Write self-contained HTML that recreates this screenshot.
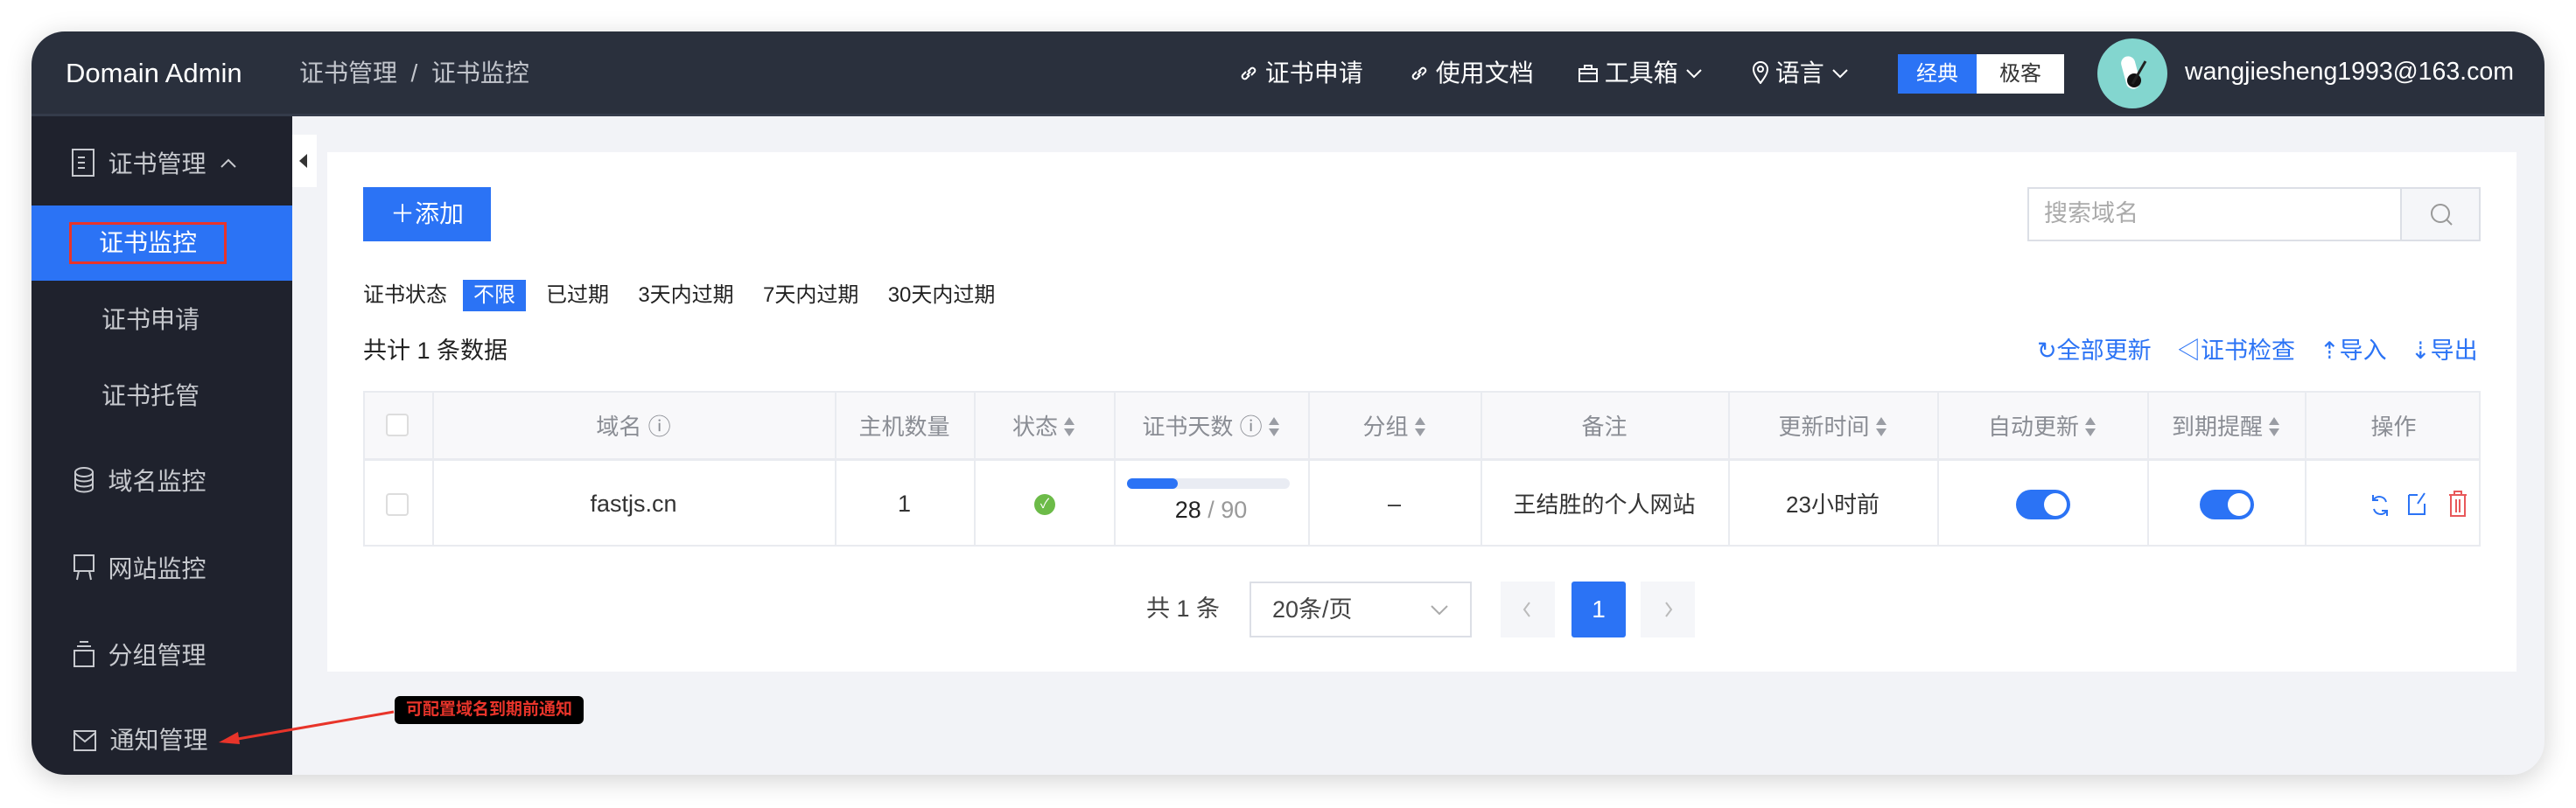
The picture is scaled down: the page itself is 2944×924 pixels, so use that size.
<!DOCTYPE html>
<html><head><meta charset="utf-8"><style>
*{box-sizing:border-box;margin:0;padding:0}
body{width:2944px;height:924px;background:#fff;font-family:"Liberation Sans","Noto Sans CJK SC",sans-serif;position:relative;overflow:hidden;line-height:1}
.a{position:absolute}
.win{left:36px;top:36px;width:2872px;height:850px;border-radius:38px;overflow:hidden;background:#f2f3f7;box-shadow:0 6px 30px rgba(0,0,0,.18)}
.hdr{left:0;top:0;width:2872px;height:97px;background:#2a303d;color:#fff;border-bottom:3px solid #343b4a}
.side{left:0;top:97px;width:298px;height:753px;background:#1f222d;color:#c7c9ce;font-size:28px}
.t{white-space:nowrap;line-height:1}
.card{left:338px;top:138px;width:2502px;height:594px;background:#fff}
.th{color:#8a8d94;font-size:26px}
.blue{color:#2b73f5}
.col{position:absolute;top:0;height:100%;border-left:2px solid #e9ebf0}
.s{display:inline-block;width:14px;height:26px;vertical-align:-4px;margin-left:6px}
</style></head><body>
<svg width="0" height="0" style="position:absolute"><defs><symbol id="so" viewBox="0 0 14 26"><path d="M7 2l6 9H1z M7 24l6-9H1z" fill="#9a9da4"/></symbol></defs></svg>
<div class="a win">
 <div class="a hdr">
  <div class="a t" style="left:39px;top:32px;font-size:31px;">Domain Admin</div>
  <div class="a t" style="left:306px;top:34px;font-size:28px;color:#c2c5cc">证书管理 &nbsp;/&nbsp; 证书监控</div>
  <div class="a t" style="left:1380px;top:34px;font-size:28px"><svg width="22" height="22" viewBox="0 0 22 22" style="vertical-align:-2px"><path d="M9 13l4-4M8 9l-4 4a3 3 0 004 4l4-4M14 13l4-4a3 3 0 00-4-4l-4 4" fill="none" stroke="#fff" stroke-width="2"/></svg> 证书申请</div>
  <div class="a t" style="left:1575px;top:34px;font-size:28px"><svg width="22" height="22" viewBox="0 0 22 22" style="vertical-align:-2px"><path d="M9 13l4-4M8 9l-4 4a3 3 0 004 4l4-4M14 13l4-4a3 3 0 00-4-4l-4 4" fill="none" stroke="#fff" stroke-width="2"/></svg> 使用文档</div>
  <div class="a t" style="left:1768px;top:34px;font-size:28px"><svg width="22" height="20" viewBox="0 0 22 20" style="vertical-align:-1px"><rect x="1" y="5" width="20" height="14" fill="none" stroke="#fff" stroke-width="2"/><path d="M7 5V1h8v4M1 10h20" fill="none" stroke="#fff" stroke-width="2"/></svg> 工具箱 <svg width="20" height="12" viewBox="0 0 20 12" style="vertical-align:3px"><path d="M2 2l8 8 8-8" fill="none" stroke="#fff" stroke-width="2"/></svg></div>
  <div class="a t" style="left:1967px;top:34px;font-size:28px"><svg width="18" height="26" viewBox="0 0 18 26" style="vertical-align:-3px"><path d="M9 25C3 17 1 13 1 9a8 8 0 0116 0c0 4-2 8-8 16z" fill="none" stroke="#fff" stroke-width="2"/><circle cx="9" cy="9" r="3" fill="none" stroke="#fff" stroke-width="2"/></svg> 语言 <svg width="20" height="12" viewBox="0 0 20 12" style="vertical-align:3px"><path d="M2 2l8 8 8-8" fill="none" stroke="#fff" stroke-width="2"/></svg></div>
  <div class="a" style="left:2133px;top:26px;width:90px;height:45px;background:#2b73f5;color:#fff;font-size:24px;text-align:center;line-height:45px">经典</div>
  <div class="a" style="left:2223px;top:26px;width:100px;height:45px;background:#fff;color:#333;font-size:24px;text-align:center;line-height:45px">极客</div>
  <div class="a" style="left:2361px;top:8px;width:80px;height:80px;border-radius:50%;background:#83d6cf"><div class="a" style="left:30px;top:20px;width:16px;height:38px;background:#fff;border-radius:8px;transform:rotate(-15deg)"></div><div class="a" style="left:34px;top:40px;width:16px;height:16px;background:#111;border-radius:50%"></div><div class="a" style="left:46px;top:24px;width:3px;height:30px;background:#222;transform:rotate(30deg)"></div></div>
  <div class="a t" style="left:2461px;top:32px;font-size:28.5px">wangjiesheng1993@163.com</div>
 </div>
 <div class="a side">
  <div class="a t" style="left:46px;top:37px"><svg width="26" height="32" viewBox="0 0 26 32" style="vertical-align:-5px"><rect x="1" y="1" width="24" height="30" fill="none" stroke="#c7c9ce" stroke-width="2"/><path d="M7 10h8M7 16h8M7 22h8" stroke="#c7c9ce" stroke-width="2"/></svg>&nbsp; 证书管理 &nbsp;<svg width="20" height="12" viewBox="0 0 20 12" style="vertical-align:4px"><path d="M2 10l8-8 8 8" fill="none" stroke="#c7c9ce" stroke-width="2"/></svg></div>
  <div class="a" style="left:0;top:102px;width:298px;height:86px;background:#2b73f5"></div>
  <div class="a t" style="left:43px;top:121px;width:180px;height:48px;border:3px solid #e8342a;color:#fff;text-align:center;line-height:42px">证书监控</div>
  <div class="a t" style="left:80px;top:219px">证书申请</div>
  <div class="a t" style="left:80px;top:306px">证书托管</div>
  <div class="a t" style="left:48px;top:401px"><svg width="24" height="30" viewBox="0 0 24 30" style="vertical-align:-4px"><ellipse cx="12" cy="6" rx="10" ry="5" fill="none" stroke="#c7c9ce" stroke-width="2"/><path d="M2 6v18c0 6 20 6 20 0V6M2 12c0 6 20 6 20 0M2 18c0 6 20 6 20 0" fill="none" stroke="#c7c9ce" stroke-width="2"/></svg>&nbsp; 域名监控</div>
  <div class="a t" style="left:48px;top:501px"><svg width="24" height="30" viewBox="0 0 24 30" style="vertical-align:-4px"><rect x="1" y="1" width="22" height="18" fill="none" stroke="#c7c9ce" stroke-width="2"/><path d="M6 19l-2 10M18 19l2 10" stroke="#c7c9ce" stroke-width="2"/></svg>&nbsp; 网站监控</div>
  <div class="a t" style="left:48px;top:600px"><svg width="24" height="30" viewBox="0 0 24 30" style="vertical-align:-4px"><rect x="1" y="11" width="22" height="18" fill="none" stroke="#c7c9ce" stroke-width="2"/><path d="M4 6h16M7 1h10" stroke="#c7c9ce" stroke-width="2"/></svg>&nbsp; 分组管理</div>
  <div class="a t" style="left:48px;top:700px"><svg width="26" height="24" viewBox="0 0 26 24" style="vertical-align:-3px"><rect x="1" y="1" width="24" height="22" fill="none" stroke="#c7c9ce" stroke-width="2"/><path d="M1 3l12 10L25 3" fill="none" stroke="#c7c9ce" stroke-width="2"/></svg>&nbsp; 通知管理</div>
 </div>
 <div class="a" style="left:298px;top:118px;width:28px;height:60px;background:#fff"><div class="a" style="left:8px;top:22px;width:0;height:0;border-top:8px solid transparent;border-bottom:8px solid transparent;border-right:9px solid #333"></div></div>
 <div class="a card">
  <div class="a t" style="left:41px;top:40px;width:146px;height:62px;background:#2b73f5;color:#fff;font-size:28px;text-align:center;line-height:62px">＋添加</div>
  <div class="a" style="left:1943px;top:40px;width:518px;height:62px;border:2px solid #dcdfe6"></div>
  <div class="a t" style="left:1962px;top:57px;font-size:27px;color:#aaa">搜索域名</div>
  <div class="a" style="left:2369px;top:40px;width:92px;height:62px;border:2px solid #dcdfe6;background:#f5f6f9"><svg class="a" style="left:32px;top:16px" width="28" height="28" viewBox="0 0 28 28"><circle cx="12" cy="12" r="10" fill="none" stroke="#999" stroke-width="2"/><path d="M19 19l6 6" stroke="#999" stroke-width="2"/></svg></div>
  <div class="a t" style="left:41px;top:152px;font-size:24px;color:#222">证书状态</div>
  <div class="a t" style="left:155px;top:146px;width:72px;height:36px;background:#2b73f5;color:#fff;font-size:24px;text-align:center;line-height:36px">不限</div>
  <div class="a t" style="left:250px;top:152px;font-size:24px;color:#222;word-spacing:0">已过期 &nbsp;&nbsp;&nbsp;&nbsp;3天内过期 &nbsp;&nbsp;&nbsp;&nbsp;7天内过期 &nbsp;&nbsp;&nbsp;&nbsp;30天内过期</div>
  <div class="a t" style="left:41px;top:214px;font-size:27px;color:#222">共计 1 条数据</div>
  <div class="a t blue" style="left:1954px;top:214px;font-size:27px">↻全部更新</div>
  <div class="a t blue" style="left:2114px;top:214px;font-size:27px">◁证书检查</div>
  <div class="a t blue" style="left:2277px;top:214px;font-size:27px">⇡导入</div>
  <div class="a t blue" style="left:2381px;top:214px;font-size:27px">⇣导出</div>
  <div class="a" style="left:41px;top:273px;width:2420px;height:178px;border:2px solid #e9ebf0">
   <div class="a" style="left:0;top:0;width:100%;height:78px;background:#f8f8fa;border-bottom:3px solid #e9ebf0"></div>
   <div class="col" style="left:77px"></div><div class="col" style="left:537px"></div><div class="col" style="left:696px"></div><div class="col" style="left:856px"></div><div class="col" style="left:1078px"></div><div class="col" style="left:1275px"></div><div class="col" style="left:1558px"></div><div class="col" style="left:1797px"></div><div class="col" style="left:2037px"></div><div class="col" style="left:2217px"></div>
   <div class="a" style="left:24px;top:24px;width:26px;height:26px;border:2px solid #ddd;border-radius:4px;background:#fff"></div>
   <div class="a" style="left:24px;top:115px;width:26px;height:26px;border:2px solid #ddd;border-radius:4px;background:#fff"></div>
   <div class="a t th" style="left:77px;width:460px;top:26px;text-align:center">域名 ⓘ</div>
   <div class="a t th" style="left:537px;width:159px;top:26px;text-align:center">主机数量</div>
   <div class="a t th" style="left:696px;width:160px;top:26px;text-align:center">状态<svg class="s"><use href="#so"/></svg></div>
   <div class="a t th" style="left:856px;width:222px;top:26px;text-align:center">证书天数 ⓘ<svg class="s"><use href="#so"/></svg></div>
   <div class="a t th" style="left:1078px;width:197px;top:26px;text-align:center">分组<svg class="s"><use href="#so"/></svg></div>
   <div class="a t th" style="left:1275px;width:283px;top:26px;text-align:center">备注</div>
   <div class="a t th" style="left:1558px;width:239px;top:26px;text-align:center">更新时间<svg class="s"><use href="#so"/></svg></div>
   <div class="a t th" style="left:1797px;width:240px;top:26px;text-align:center">自动更新<svg class="s"><use href="#so"/></svg></div>
   <div class="a t th" style="left:2037px;width:180px;top:26px;text-align:center">到期提醒<svg class="s"><use href="#so"/></svg></div>
   <div class="a t th" style="left:2217px;width:203px;top:26px;text-align:center">操作</div>
   <div class="a t" style="left:77px;width:460px;top:114px;text-align:center;font-size:27px;color:#333">fastjs.cn</div>
   <div class="a t" style="left:537px;width:159px;top:114px;text-align:center;font-size:27px;color:#333">1</div>
   <div class="a" style="left:765px;top:116px;width:24px;height:24px;border-radius:50%;background:#6cbb48;color:#fff;font-size:15px;text-align:center;line-height:24px">✓</div>
   <div class="a" style="left:871px;top:98px;width:186px;height:12px;border-radius:6px;background:#e9ecf3"><div style="width:58px;height:12px;border-radius:6px;background:#2b73f5"></div></div>
   <div class="a t" style="left:856px;width:222px;top:121px;text-align:center;font-size:27px;color:#222">28 <span style="color:#999">/ 90</span></div>
   <div class="a t" style="left:1078px;width:197px;top:114px;text-align:center;font-size:27px;color:#333">–</div>
   <div class="a t" style="left:1275px;width:283px;top:115px;text-align:center;font-size:26px;color:#333">王结胜的个人网站</div>
   <div class="a t" style="left:1558px;width:239px;top:115px;text-align:center;font-size:26px;color:#333">23小时前</div>
   <div class="a" style="left:1887px;top:111px;width:62px;height:34px;border-radius:17px;background:#2b73f5"><div class="a" style="left:32px;top:4px;width:26px;height:26px;border-radius:50%;background:#fff"></div></div>
   <div class="a" style="left:2097px;top:111px;width:62px;height:34px;border-radius:17px;background:#2b73f5"><div class="a" style="left:32px;top:4px;width:26px;height:26px;border-radius:50%;background:#fff"></div></div>
   <svg class="a" style="left:2292px;top:115px" width="22" height="28" viewBox="0 0 22 28"><path d="M18 10a8 8 0 00-14-3M4 18a8 8 0 0014 3" fill="none" stroke="#2b73f5" stroke-width="2"/><path d="M3 2v6h6M19 26v-6h-6" fill="none" stroke="#2b73f5" stroke-width="2"/></svg>
   <svg class="a" style="left:2334px;top:113px" width="24" height="28" viewBox="0 0 24 28"><path d="M2 4h10M2 4v22h18V14" fill="none" stroke="#2b73f5" stroke-width="2"/><path d="M20 2l-8 12" stroke="#2b73f5" stroke-width="2"/></svg>
   <svg class="a" style="left:2380px;top:111px" width="24" height="32" viewBox="0 0 24 32"><path d="M2 6h20M8 6V2h8v4M4 6v24h16V6M10 11v15M14 11v15" fill="none" stroke="#e8585a" stroke-width="2"/></svg>
  </div>
  <div class="a t" style="left:936px;top:509px;font-size:27px;color:#444">共 1 条</div>
  <div class="a" style="left:1054px;top:491px;width:254px;height:64px;border:2px solid #dcdfe6"><span class="a t" style="left:24px;top:17px;font-size:27px;color:#444">20条/页</span><svg class="a" style="left:204px;top:24px" width="22" height="14" viewBox="0 0 22 14"><path d="M2 2l9 9 9-9" fill="none" stroke="#aaa" stroke-width="2"/></svg></div>
  <div class="a" style="left:1341px;top:491px;width:62px;height:64px;background:#f5f6f9"><svg class="a" style="left:25px;top:22px" width="10" height="20" viewBox="0 0 10 20"><path d="M8 2L2 10l6 8" fill="none" stroke="#bbb" stroke-width="2"/></svg></div>
  <div class="a" style="left:1422px;top:491px;width:62px;height:64px;background:#2b73f5;color:#fff;font-size:28px;text-align:center;line-height:64px;border-radius:3px">1</div>
  <div class="a" style="left:1501px;top:491px;width:62px;height:64px;background:#f5f6f9"><svg class="a" style="left:27px;top:22px" width="10" height="20" viewBox="0 0 10 20"><path d="M2 2l6 8-6 8" fill="none" stroke="#bbb" stroke-width="2"/></svg></div>
 </div>
 <div class="a t" style="left:415px;top:760px;width:216px;height:32px;background:#000;border-radius:6px;color:#e8342a;font-size:19px;font-weight:bold;text-align:center;line-height:32px">可配置域名到期前通知</div>
 <svg class="a" style="left:200px;top:760px" width="230" height="70" viewBox="0 0 230 70"><path d="M214 18L30 50" stroke="#e8342a" stroke-width="3"/><path d="M14 53l22-12 2 14z" fill="#e8342a"/></svg>
</div>
</body></html>
